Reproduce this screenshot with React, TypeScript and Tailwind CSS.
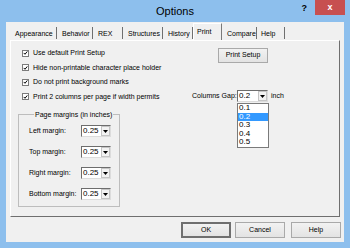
import React from 'react';

const tabs = [
  { label: 'Appearance', width: 'w-[47px]' },
  { label: 'Behavior', width: 'w-[36px]' },
  { label: 'REX', width: 'w-[30px]' },
  { label: 'Structures', width: 'w-[40px]' },
  { label: 'History', width: 'w-[30px]' },
  { label: 'Print', width: 'w-[29px]', active: true },
  { label: 'Compare', width: 'w-[34px]' },
  { label: 'Help', width: 'w-[29px]' },
];

const checks = [
  'Use default Print Setup',
  'Hide non-printable character place holder',
  'Do not print background marks',
  'Print 2 columns per page if width permits',
];

const margins = ['Left margin:', 'Top margin:', 'Right margin:', 'Bottom margin:'];

const gaps = ['0.1', '0.2', '0.3', '0.4', '0.5'];

function CheckBox({ label }: { label: string }) {
  return (
    <div className="flex h-[14.5px] items-center gap-[4px]">
      <span className="flex h-[7px] w-[7px] items-center justify-center border border-[#7b7b7b] bg-white">
        <svg viewBox="0 0 7 7" className="h-[6px] w-[6px]">
          <path d="M1 3.4 L2.8 5.3 L6 1.3" stroke="#000" strokeWidth="1.4" fill="none" />
        </svg>
      </span>
      <span>{label}</span>
    </div>
  );
}

function Combo({ value, width }: { value: string; width: string }) {
  return (
    <div className={`flex h-[12px] ${width} border border-t-[#6d6d6d] border-l-[#6d6d6d] border-r-[#dcdcdc] border-b-[#dcdcdc] bg-white`}>
      <span className="flex-1 pl-[1px] text-[8px] leading-[10px]">{value}</span>
      <span className="flex w-[9px] items-center justify-center border border-[#c4c4c4] bg-[#f2f2f2]">
        <svg width="5" height="3" viewBox="0 0 5 3">
          <path d="M0 0h5L2.5 3z" fill="#000" />
        </svg>
      </span>
    </div>
  );
}

function Button({ label, isDefault }: { label: string; isDefault?: boolean }) {
  return (
    <button
      className={`flex h-full w-[50px] items-center justify-center bg-gradient-to-b from-[#f2f2f2] to-[#e3e3e3] ${
        isDefault ? 'border-2 border-[#6f6f6f]' : 'border border-[#a9a9a9]'
      }`}
    >
      {label}
    </button>
  );
}

const App: React.FC = () => {
  return (
    <div className="flex h-[248px] w-[350px] flex-col bg-[#8dbfed] font-['Liberation_Sans',Arial,sans-serif] text-[7px] text-black">
      {/* Title bar */}
      <div className="grid h-[22px] grid-cols-[1fr_auto_1fr]">
        <div />
        <div className="text-[11px] leading-[22px]">Options</div>
        <div className="flex items-start justify-end pr-[5px]">
          <span className="mr-[8px] mt-[2px] text-[9px] font-bold leading-[12px]">?</span>
          <span className="flex h-[15px] w-[30px] items-center justify-center bg-[#c75050] text-[9px] font-bold leading-none text-white">
            x
          </span>
        </div>
      </div>

      {/* Client area */}
      <div className="mx-[6px] mb-[6px] flex flex-1 flex-col bg-[#f0f0f0]">
        {/* Tabs */}
        <div className="flex h-[18px] items-end pl-[4px]">
          {tabs.map((t) =>
            t.active ? (
              <div
                key={t.label}
                className={`${t.width} flex h-[17px] items-center border-l border-t border-r border-l-white border-t-white border-r-[#7a7a7a] bg-[#f0f0f0] pl-[3px]`}
              >
                {t.label}
              </div>
            ) : (
              <div key={t.label} className={`${t.width} flex h-[14px] items-center pl-[5px]`}>
                <span className="flex-1 leading-[11px]">{t.label}</span>
                <span className="h-[12px] w-[1px] bg-[#6f6f6f]" />
              </div>
            )
          )}
        </div>

        {/* Panel */}
        <div className="mx-[4px] flex h-[177px] border border-l-white border-t-white border-r-[#6f6f6f] border-b-[#6f6f6f] pt-[5px]">
          {/* Left column */}
          <div className="w-[181px] pl-[7px]">
            <div className="pl-[4px]">
              {checks.map((c) => (
                <CheckBox key={c} label={c} />
              ))}
            </div>
            <fieldset className="mt-[5.5px] h-[97px] w-[102px] border border-[#bdbdbd] pl-[10px]">
              <legend className="ml-[5px] px-[1px] leading-[9px]">Page margins (in inches)</legend>
              <div className="flex flex-col gap-[9px] pt-[6.5px]">
                {margins.map((m) => (
                  <div key={m} className="flex h-[12px] items-center">
                    <span className="w-[52px]">{m}</span>
                    <Combo value="0.25" width="w-[30px]" />
                  </div>
                ))}
              </div>
            </fieldset>
          </div>

          {/* Right column */}
          <div className="flex flex-col">
            <div className="ml-[26px] mt-[2px] h-[15px]">
              <Button label="Print Setup" />
            </div>
            <div className="mt-[27px] flex h-[12px] items-center">
              <span className="w-[45px]">Columns Gap:</span>
              <div className="relative">
                <Combo value="0.2" width="w-[31px]" />
                <div className="absolute left-0 top-[13px] w-[32px] border border-[#7a7a7a] bg-white">
                  {gaps.map((g) => (
                    <div
                      key={g}
                      className={`h-[8.6px] pl-[1px] text-[8px] leading-[8.6px] ${
                        g === '0.2' ? 'bg-[#3399ff] text-white' : ''
                      }`}
                    >
                      {g}
                    </div>
                  ))}
                </div>
              </div>
              <span className="ml-[3px]">inch</span>
            </div>
          </div>
        </div>

        {/* Dialog buttons */}
        <div className="mt-[5px] flex h-[16px] justify-end pr-[3px]">
          <Button label="OK" isDefault />
          <div className="ml-[4px] h-full">
            <Button label="Cancel" />
          </div>
          <div className="ml-[6px] h-full">
            <Button label="Help" />
          </div>
        </div>
      </div>
    </div>
  );
};

export default App;
